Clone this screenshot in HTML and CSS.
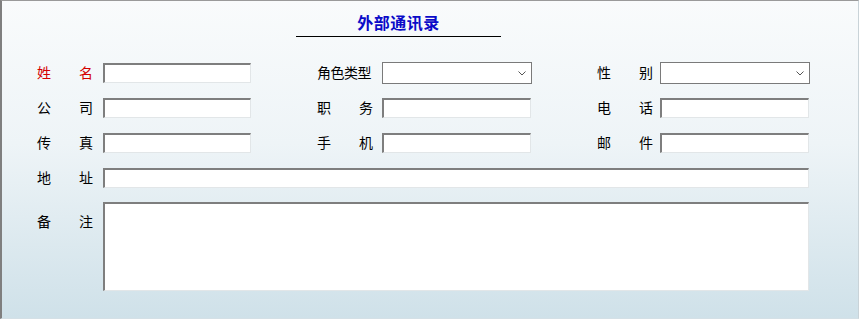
FILE: index.html
```html
<!DOCTYPE html>
<html lang="zh-CN">
<head>
<meta charset="utf-8">
<title>外部通讯录</title>
<link rel="stylesheet" href="styles.css">
</head>
<body>
<div class="window">
  <div class="title-wrap"><h1 class="title">外部通讯录</h1></div>
  <form class="form">
    <label class="lbl two req"><span>姓</span><span>名</span></label>
    <div class="cell"><input class="field" type="text"></div>
    <label class="lbl four">角色类型</label>
    <div class="cell"><span class="sel"><select class="select"><option></option></select><svg class="chev" width="8" height="5" viewBox="0 0 8 5"><path d="M0.5 0.5 L4 4 L7.5 0.5" fill="none" stroke="#555" stroke-width="1"/></svg></span></div>
    <label class="lbl two"><span>性</span><span>别</span></label>
    <div class="cell"><span class="sel"><select class="select"><option></option></select><svg class="chev" width="8" height="5" viewBox="0 0 8 5"><path d="M0.5 0.5 L4 4 L7.5 0.5" fill="none" stroke="#555" stroke-width="1"/></svg></span></div>

    <label class="lbl two"><span>公</span><span>司</span></label>
    <div class="cell"><input class="field" type="text"></div>
    <label class="lbl two"><span>职</span><span>务</span></label>
    <div class="cell"><input class="field w149" type="text"></div>
    <label class="lbl two"><span>电</span><span>话</span></label>
    <div class="cell"><input class="field w149" type="text"></div>

    <label class="lbl two"><span>传</span><span>真</span></label>
    <div class="cell"><input class="field" type="text"></div>
    <label class="lbl two"><span>手</span><span>机</span></label>
    <div class="cell"><input class="field w149" type="text"></div>
    <label class="lbl two"><span>邮</span><span>件</span></label>
    <div class="cell"><input class="field w149" type="text"></div>

    <label class="lbl two"><span>地</span><span>址</span></label>
    <div class="cell wide"><input class="field full" type="text"></div>

    <label class="lbl two top"><span>备</span><span>注</span></label>
    <div class="cell wide tall"><textarea class="field full area"></textarea></div>
  </form>
</div>
</body>
</html>
```

FILE: styles.css
```css
html, body {
  margin: 0;
  padding: 0;
}
body {
  width: 860px;
  height: 320px;
  overflow: hidden;
  font-family: "Noto Sans CJK SC", "Noto Sans", sans-serif;
  font-size: 14px;
  color: #000;
}
.window {
  box-sizing: border-box;
  width: 859px;
  height: 319px;
  border-top: 1px solid #9a9a9a;
  border-left: 2px solid #7f7f7f;
  border-right: 1px solid #c9d3d8;
  border-bottom: 1px solid #d4e0e6;
  background: linear-gradient(to bottom, #f9fbfc 0%, #eef4f7 45%, #cfe1e9 100%);
  padding-top: 8px;
}
.title-wrap {
  display: flex;
  justify-content: flex-start;
  padding-left: 294px;
}
.title {
  margin: 0;
  width: 205px;
  height: 27px;
  border-bottom: 1px solid #000;
  text-align: center;
  font-size: 16px;
  line-height: 26px;
  font-weight: bold;
  color: #0b0bc8;
  letter-spacing: 0.5px;
}
.form {
  display: grid;
  grid-template-columns: 66px 214px 65px 215px 63px 149px;
  grid-auto-rows: 21px;
  row-gap: 14px;
  padding-left: 35px;
  margin-top: 25px;
}
.lbl {
  display: flex;
  align-items: center;
  width: 56px;
  height: 21px;
  line-height: 21px;
  white-space: nowrap;
}
.lbl.two {
  justify-content: space-between;
}
.lbl.four {
  letter-spacing: -0.5px;
}
.lbl.req {
  color: #d40000;
}
.lbl.top {
  align-items: flex-start;
  padding-top: 9px;
}
.cell {
  display: flex;
  align-items: center;
}
.cell.wide {
  grid-column: 2 / -1;
}
.cell.tall {
  height: 89px;
  align-items: stretch;
}
.form .tall, .form .lbl.top {
  grid-row-end: span 1;
}
.field {
  box-sizing: border-box;
  width: 148px;
  height: 20px;
  margin: 0;
  padding: 0 2px;
  border-style: solid;
  border-width: 2px 1px 1px 2px;
  border-color: #7e7e7e #e2e6e8 #e2e6e8 #7e7e7e;
  background: #fff;
  font: inherit;
  outline: none;
}
.field.w149 {
  width: 149px;
}
.field.full {
  width: 707px;
}
.field.area {
  height: 89px;
  resize: none;
}
.sel {
  position: relative;
  display: block;
  width: 150px;
  height: 22px;
}
.select {
  box-sizing: border-box;
  width: 150px;
  height: 22px;
  margin: 0;
  border: 1px solid #7a7a7a;
  background: #fff;
  appearance: none;
  -webkit-appearance: none;
  font: inherit;
  outline: none;
}
.chev {
  position: absolute;
  right: 6px;
  top: 9px;
}
```
